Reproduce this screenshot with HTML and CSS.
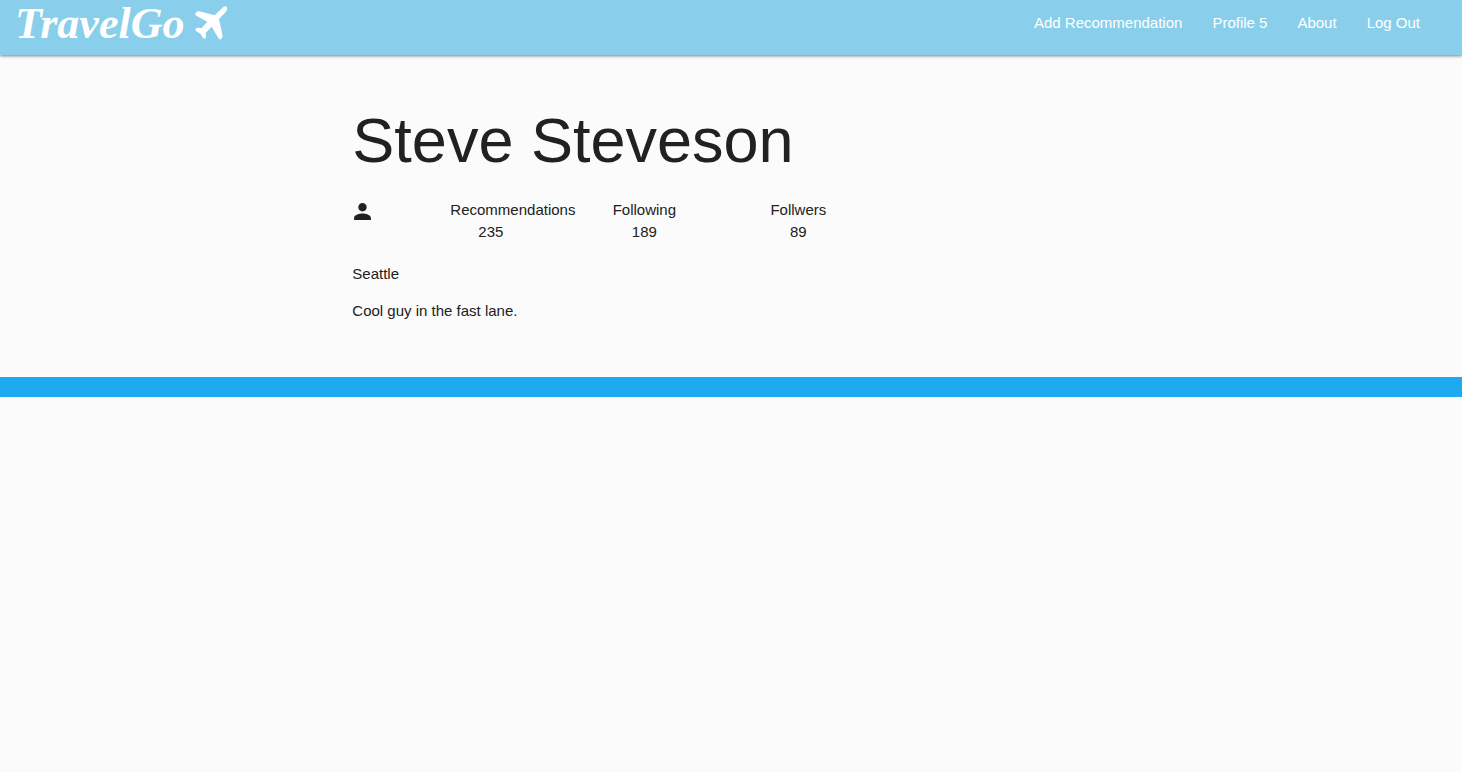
FILE: index.html
```html
<!DOCTYPE html>
<html lang="en">
<head>
<meta charset="utf-8">
<title>TravelGo</title>
<link rel="stylesheet" href="styles.css">
</head>
<body>
<header class="navbar">
  <a class="brand" href="#">
    <span class="brand-name">TravelGo</span>
    <svg class="plane" viewBox="0 0 120 120" aria-hidden="true"><path d="M93 13Q101 7 105 13Q108 19 102 26L81 48L92 99Q92 103 87 108Q83 112 79 105L59 71L41 90L42 103Q38 110 33 105L25 92L11 83Q8 77 14 74L29 75L46 56L13 38Q7 34 11 29Q15 23 22 25L68 37Z"/></svg>
  </a>
  <nav class="links">
    <a href="#">Add Recommendation</a>
    <a href="#">Profile 5</a>
    <a href="#">About</a>
    <a href="#">Log Out</a>
  </nav>
</header>
<main class="profile">
  <h1>Steve Steveson</h1>
  <div class="stats">
    <svg class="person" viewBox="2 2 20 20" aria-hidden="true"><path d="M12 12c2.200 0 4-1.800 4-4s-1.800-4-4-4-4 1.800-4 4 1.800 4 4 4zm0 2c-2.700 0-8 1.300-8 4v2h16v-2c0-2.700-5.300-4-8-4z"/></svg>
    <div class="stat stat-wide"><span>Recommendations</span><span class="count">235</span></div>
    <div class="stat"><span>Following</span><span>189</span></div>
    <div class="stat"><span>Follwers</span><span>89</span></div>
  </div>
  <p>Seattle</p>
  <p>Cool guy in the fast lane.</p>
</main>
<footer class="footer"><p>All Rights Reserved</p></footer>
</body>
</html>
```
FILE: styles.css
```css
* { box-sizing: border-box; }
body {
  margin: 0;
  background: #fbfbfb;
  color: #212121;
  font-family: "Liberation Sans", Arial, sans-serif;
  font-size: 15px;
  line-height: 22px;
  overflow-x: hidden;
}
.navbar {
  display: flex;
  justify-content: space-between;
  height: 55px;
  padding: 0 27px 0 15px;
  background: #89cfeb;
  box-shadow: 0 1px 3px rgba(0, 0, 0, .5);
}
.navbar a { color: #fff; text-decoration: none; }
.brand { display: flex; height: 48px; }
.brand-name {
  font: italic bold 44px/48px "Liberation Serif", serif;
}
.plane { width: 40px; height: 40px; margin: 3px 0 0 8px; fill: #fff; }
.links { display: flex; }
.links a { padding: 12px 15px; }
.profile { width: 51.8%; margin: 0 auto; padding: 51px 0 55px; }
h1 { margin: 0 0 25px; font-size: 63px; line-height: 68px; font-weight: 400; }
.stats { display: flex; margin-bottom: 20px; }
.person { width: 21px; height: 21px; margin: 2px 77px 0 0; fill: #212121; }
.stat { display: flex; flex-direction: column; align-items: center; width: 64px; margin-right: 90px; }
.stat-wide { width: 127px; margin-right: 35px; align-items: flex-start; }
.count { padding-left: 28px; }
.profile p { margin: 0 0 15px; }
.profile p:last-child { margin-bottom: 0; }
.footer { height: 20px; padding-top: 20px; background: #1eaaf1; }
.footer p {
  margin: 0 -22px 0 0;
  color: #fff;
  text-align: right;
  white-space: nowrap;
}
```
